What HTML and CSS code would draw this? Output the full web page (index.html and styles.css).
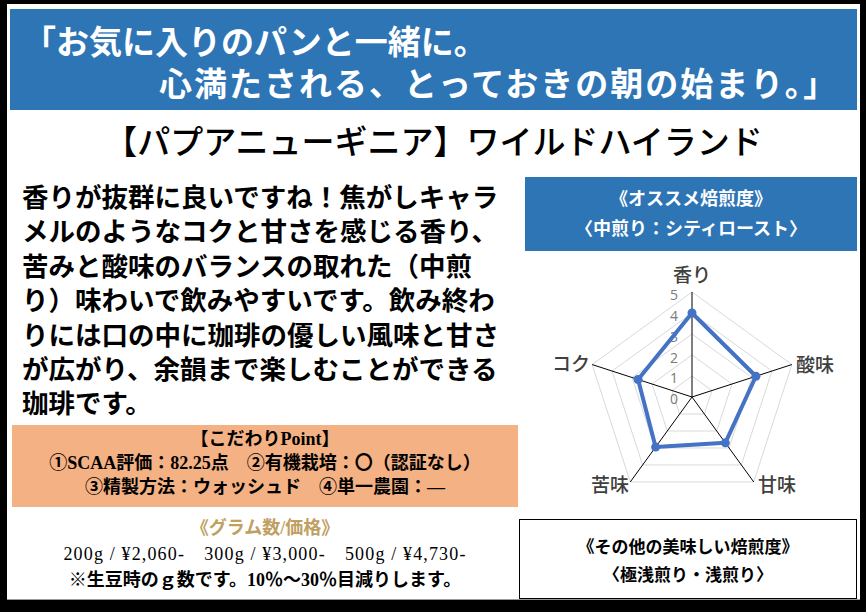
FILE: index.html
```html
<!DOCTYPE html>
<html lang="ja">
<head>
<meta charset="utf-8">
<title>パプアニューギニア ワイルドハイランド</title>
<link rel="stylesheet" href="styles.css">
</head>
<body>
<div class="frame">
  <header class="banner">
    <div class="banner-l1">「お気に入りのパンと一緒に。</div>
    <div class="banner-l2">心満たされる、とっておきの朝の始まり。」</div>
  </header>
  <h1 class="title">【パプアニューギニア】ワイルドハイランド</h1>
  <div class="main">
    <section class="left">
      <p class="desc">香りが抜群に良いですね！焦がしキャラ<br>メルのようなコクと甘さを感じる香り、<br>苦みと酸味のバランスの取れた（中煎<br>り）味わいで飲みやすいです。飲み終わ<br>りには口の中に珈琲の優しい風味と甘さ<br>が広がり、余韻まで楽しむことができる<br>珈琲です。</p>
      <div class="point">
        <div>【こだわりPoint】</div>
        <div>①SCAA評価：82.25点　②有機栽培：〇（認証なし）</div>
        <div>③精製方法：ウォッシュド　④単一農園：—</div>
      </div>
      <div class="price">
        <div class="price-title">《グラム数/価格》</div>
        <div class="price-list">200g / ¥2,060-　300g / ¥3,000-　500g / ¥4,730-</div>
        <div class="price-note">※生豆時のｇ数です。10％～30％目減りします。</div>
      </div>
    </section>
    <aside class="right">
      <div class="roast">
        <div>《オススメ焙煎度》</div>
        <div>〈中煎り：シティロースト〉</div>
      </div>
      <svg class="radar" viewBox="518 253 339 262" xmlns="http://www.w3.org/2000/svg">
        <g class="rings">
          <polygon points="692,376 711.97,390.51 704.34,413.99 679.66,413.99 672.03,390.51"/>
          <polygon points="692,355 731.95,384.02 716.69,430.98 667.31,430.98 652.05,384.02"/>
          <polygon points="692,334 751.92,377.53 729.03,447.97 654.97,447.97 632.08,377.53"/>
          <polygon points="692,313 771.89,371.04 741.38,464.96 642.62,464.96 612.11,371.04"/>
          <polygon points="692,292 791.87,364.56 753.72,481.94 630.28,481.94 592.13,364.56"/>
        </g>
        <g class="axes">
          <line x1="692" y1="397" x2="692" y2="292"/>
          <line x1="692" y1="397" x2="791.87" y2="364.56"/>
          <line x1="692" y1="397" x2="753.72" y2="481.94"/>
          <line x1="692" y1="397" x2="630.28" y2="481.94"/>
          <line x1="692" y1="397" x2="592.13" y2="364.56"/>
        </g>
        <g class="ticks" text-anchor="middle" dominant-baseline="central">
          <text x="674" y="294">5</text>
          <text x="674" y="315">4</text>
          <text x="674" y="336">3</text>
          <text x="674" y="357">2</text>
          <text x="674" y="377">1</text>
          <text x="674" y="398">0</text>
        </g>
        <polygon class="data" points="692,313 755.91,376.24 725.33,442.87 655.59,447.12 638.07,379.48"/>
        <g class="marks">
          <circle cx="692" cy="313" r="4.5"/>
          <circle cx="755.91" cy="376.24" r="4.5"/>
          <circle cx="725.33" cy="442.87" r="4.5"/>
          <circle cx="655.59" cy="447.12" r="4.5"/>
          <circle cx="638.07" cy="379.48" r="4.5"/>
        </g>
        <g class="labels" text-anchor="middle" dominant-baseline="central">
          <text x="692" y="273">香り</text>
          <text x="815" y="363">酸味</text>
          <text x="777" y="483">甘味</text>
          <text x="610" y="483">苦味</text>
          <text x="571" y="362">コク</text>
        </g>
      </svg>
      <div class="other">
        <div>《その他の美味しい焙煎度》</div>
        <div>〈極浅煎り・浅煎り〉</div>
      </div>
    </aside>
  </div>
</div>
</body>
</html>
```

FILE: styles.css
```css
html, body {
  margin: 0;
  padding: 0;
}

body {
  background: #000;
  width: 866px;
  height: 612px;
  overflow: hidden;
  font-family: "Liberation Serif", "Noto Sans CJK JP", sans-serif;
  color: #000;
}

.frame {
  margin: 0 6px 0 7px;
  position: relative;
  top: 4px;
  height: 596px;
  box-sizing: border-box;
  background: #fff;
  padding: 5px 3px 0 3px;
  border-bottom: 1px solid #9a9a9a;
}

.banner {
  background: #2e75b6;
  color: #fff;
  font-family: "Noto Sans CJK JP", sans-serif;
  font-weight: 700;
  font-size: 33px;
  line-height: 42px;
  padding: 10px 0 7px;
  white-space: nowrap;
}

.banner-l1 {
  padding-left: 13px;
}

.banner-l2 {
  padding-left: 149px;
  letter-spacing: 2px;
}

.title {
  margin: 0;
  padding-top: 8px;
  font-family: "Noto Sans CJK JP", sans-serif;
  font-size: 33px;
  font-weight: 500;
  line-height: 44px;
  text-align: center;
  white-space: nowrap;
}

.main {
  display: flex;
}

.left {
  width: 506px;
  margin-left: 2px;
}

.desc {
  margin: 17px 0 0 10px;
  font-family: "Noto Sans CJK JP", sans-serif;
  font-size: 26.5px;
  line-height: 34.4px;
  font-weight: 700;
  white-space: nowrap;
}

.point {
  margin-top: 5px;
  background: #f4b183;
  padding: 2px 0 8px;
  font-size: 18px;
  line-height: 24px;
  font-weight: 700;
  text-align: center;
  white-space: nowrap;
}

.price {
  margin-top: 8px;
  font-size: 18px;
  line-height: 26px;
  text-align: center;
  white-space: nowrap;
}

.price-title {
  color: #bfa062;
  font-weight: 700;
}

.price-list {
  letter-spacing: 1.15px;
}

.price-note {
  font-weight: 700;
}

.right {
  width: 339px;
}

.roast {
  margin: 15px 0 0 7px;
  background: #2e75b6;
  color: #fff;
  font-size: 18px;
  line-height: 30px;
  font-weight: 700;
  padding: 7px 0;
  text-align: center;
  white-space: nowrap;
}

.radar {
  display: block;
  margin-top: 2px;
  width: 339px;
  height: 262px;
}

.rings polygon {
  fill: none;
  stroke: #d9d9d9;
  stroke-width: 1;
}

.axes line {
  stroke: #000;
  stroke-width: 1;
}

.ticks text {
  font-family: "Open Sans", "Noto Sans", sans-serif;
  font-size: 14px;
  fill: #7a7a7a;
}

.data {
  fill: none;
  stroke: #4472c4;
  stroke-width: 4;
  stroke-linejoin: round;
}

.marks circle {
  fill: #4472c4;
}

.labels text {
  font-family: "Noto Sans CJK JP", sans-serif;
  font-size: 19px;
  font-weight: 500;
  fill: #404040;
}

.other {
  margin: 4px 0 0 1px;
  border: 1px solid #000;
  padding: 14px 0 8px;
  font-size: 17px;
  line-height: 28px;
  font-weight: 700;
  text-align: center;
  white-space: nowrap;
}
```
